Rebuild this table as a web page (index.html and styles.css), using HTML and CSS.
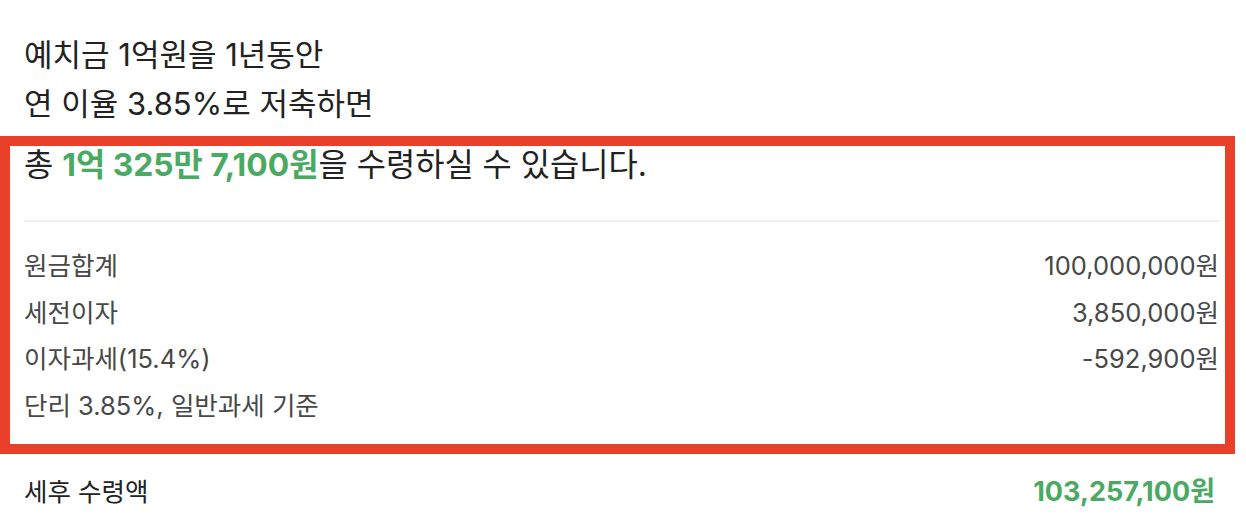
FILE: index.html
```html
<!DOCTYPE html>
<html lang="ko">
<head>
<meta charset="utf-8">
<title>예금 계산 결과</title>
<link rel="stylesheet" href="styles.css">
</head>
<body>
<main class="page">
  <header class="intro">
    <p class="intro-line">예치금 1억원을 1년동안</p>
    <p class="intro-line">연 이율 3.85%로 저축하면</p>
  </header>
  <section class="result">
    <p class="result-title">총 <strong class="green">1억 325만 7,100원</strong>을 수령하실 수 있습니다.</p>
    <hr class="divider">
    <dl class="rows">
      <div class="row"><dt>원금합계</dt><dd>100,000,000원</dd></div>
      <div class="row"><dt>세전이자</dt><dd>3,850,000원</dd></div>
      <div class="row"><dt>이자과세(15.4%)</dt><dd>-592,900원</dd></div>
      <div class="row"><dt>단리 3.85%, 일반과세 기준</dt><dd></dd></div>
    </dl>
  </section>
  <div class="total">
    <span class="total-label">세후 수령액</span>
    <span class="total-value green">103,257,100원</span>
  </div>
</main>
</body>
</html>
```

FILE: styles.css
```css
* { box-sizing: border-box; }
html, body { margin: 0; padding: 0; background: #fff; }
body {
  font-family: Inter, "Noto Sans CJK KR", sans-serif;
  color: #222;
}
.page {
  width: 1235px;
  padding-top: 30px;
}
.intro { padding: 0 24px; }
.intro-line {
  margin: 0;
  font-size: 31px;
  line-height: 49px;
  color: #222;
}
.result {
  margin-top: 8px;
  border: 10px solid #e8402a;
  padding: 0 6px 17px 14px;
}
.result-title {
  margin: 0;
  font-size: 31.8px;
  line-height: 38px;
  color: #222;
}
.green { color: #4aa962; font-weight: 700; }
.divider {
  margin: 36px 0 18px;
  border: 0;
  height: 2px;
  background: #f0f0f0;
}
.rows { margin: 0; }
.row {
  display: flex;
  justify-content: space-between;
  align-items: center;
  height: 46.7px;
  font-size: 25.5px;
  color: #484848;
}
.row dt, .row dd { margin: 0; }
.total {
  display: flex;
  justify-content: space-between;
  align-items: center;
  height: 46px;
  margin-top: 13px;
  padding: 0 20px 0 24px;
  font-size: 25.5px;
  color: #222;
}
.total-value { font-weight: 700; font-size: 27px; }
```
